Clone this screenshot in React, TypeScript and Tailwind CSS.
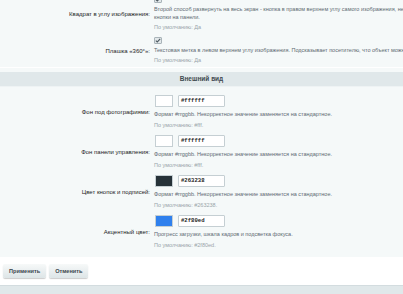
import React from "react";

const font = { fontFamily: '"Liberation Sans", Arial, sans-serif' };

function Check() {
  return (
    <div className="w-[8px] h-[7px] shrink-0 rounded-[1px] border border-[#a9b4b9] bg-[#e2e8ea] flex items-center justify-center">
      <svg width="6" height="5" viewBox="0 0 6 5">
        <path d="M0.8 2.6 L2.3 4 L5.2 0.9" fill="none" stroke="#4d5a61" strokeWidth="1.1" />
      </svg>
    </div>
  );
}

function CheckRow({ label, lines, def }: { label: string; lines: string[]; def: string }) {
  return (
    <div className="grid grid-cols-[154px_1fr] items-center py-[3px]">
      <div className="text-right pr-[4px] text-[6px] leading-[8px] text-[#1d1d1d] whitespace-nowrap">{label}</div>
      <div className="flex flex-col">
        <Check />
        <div className="mt-[2px] text-[5.5px] leading-[8px] text-[#5d6a72] whitespace-nowrap">
          {lines.map((l, i) => (
            <div key={i} className="h-[8px]">{l}</div>
          ))}
        </div>
        <div className="mt-[2px] h-[8px] text-[5.5px] leading-[8px] text-[#9aa5aa] whitespace-nowrap">{def}</div>
      </div>
    </div>
  );
}

function ColorRow({ label, color, value, desc, def }: { label: string; color: string; value: string; desc: string; def: string }) {
  return (
    <div className="grid grid-cols-[154px_1fr] items-center py-[3px]">
      <div className="text-right pr-[4px] text-[6px] leading-[8px] text-[#1d1d1d] whitespace-nowrap">{label}</div>
      <div className="flex flex-col">
        <div className="flex items-center gap-[5px] pl-[1px] h-[12px] shrink-0">
          <div className="w-[18px] h-[12px] border border-[#c5cfd3]" style={{ backgroundColor: color }} />
          <div className="w-[47px] h-[12px] border border-[#c5cfd3] rounded-[1px] bg-white flex items-center pl-[2px]">
            <span className="text-[5.6px] font-bold text-[#222]" style={{ fontFamily: '"Liberation Mono", monospace' }}>{value}</span>
          </div>
        </div>
        <div className="mt-[3px] h-[8px] text-[5.5px] leading-[8px] text-[#5d6a72] whitespace-nowrap">{desc}</div>
        <div className="mt-[3px] h-[8px] text-[5.5px] leading-[8px] text-[#9aa5aa] whitespace-nowrap">{def}</div>
      </div>
    </div>
  );
}

export default function App() {
  return (
    <div className="w-[403px] h-[294px] overflow-hidden bg-[#f5f9f9] flex flex-col" style={font}>
      <div className="-mt-[7px] shrink-0">
        <CheckRow
          label="Квадрат в углу изображения:"
          lines={[
            "Второй способ развернуть на весь экран - кнопка в правом верхнем углу самого изображения, независимо от",
            "кнопки на панели.",
          ]}
          def="По умолчанию: Да"
        />
        <CheckRow
          label="Плашка «360°»:"
          lines={["Текстовая метка в левом верхнем углу изображения. Подсказывает посетителю, что объект можно вращать."]}
          def="По умолчанию: Да"
        />
      </div>
      <div className="h-[1px] shrink-0 bg-white" />
      <div className="h-[4px] shrink-0" />
      <div className="h-[15px] shrink-0 bg-[#e0e8ea] border-b border-[#eef3f4] flex items-center justify-center text-[6.5px] font-bold text-[#3f4a50]">
        Внешний вид
      </div>
      <div className="pt-[5px] pb-[5px] shrink-0">
        <ColorRow
          label="Фон под фотографиями:"
          color="#ffffff"
          value="#ffffff"
          desc="Формат #rrggbb. Некорректное значение заменяется на стандартное."
          def="По умолчанию: #fff."
        />
        <ColorRow
          label="Фон панели управления:"
          color="#ffffff"
          value="#ffffff"
          desc="Формат #rrggbb. Некорректное значение заменяется на стандартное."
          def="По умолчанию: #fff."
        />
        <ColorRow
          label="Цвет кнопок и подписей:"
          color="#263238"
          value="#263238"
          desc="Формат #rrggbb. Некорректное значение заменяется на стандартное."
          def="По умолчанию: #263238."
        />
        <ColorRow
          label="Акцентный цвет:"
          color="#2f80ed"
          value="#2f80ed"
          desc="Прогресс загрузки, шкала кадров и подсветка фокуса."
          def="По умолчанию: #2f80ed."
        />
      </div>
      <div className="bg-white h-[28px] shrink-0 flex items-center gap-[3px] pl-[3px]">
        <button className="h-[14px] px-[6px] rounded-[2px] bg-gradient-to-b from-[#f7f9f9] to-[#dde5e7] shadow-[0_1px_1px_rgba(0,0,0,0.2)] text-[5.6px] font-bold text-[#3c474d]">
          Применить
        </button>
        <button className="h-[14px] px-[6px] rounded-[2px] bg-gradient-to-b from-[#f7f9f9] to-[#dde5e7] shadow-[0_1px_1px_rgba(0,0,0,0.2)] text-[5.6px] font-bold text-[#3c474d]">
          Отменить
        </button>
      </div>
      <div className="h-[12px] shrink-0 bg-[#e0e8ea] border-t border-[#d3dcdf]" />
    </div>
  );
}
